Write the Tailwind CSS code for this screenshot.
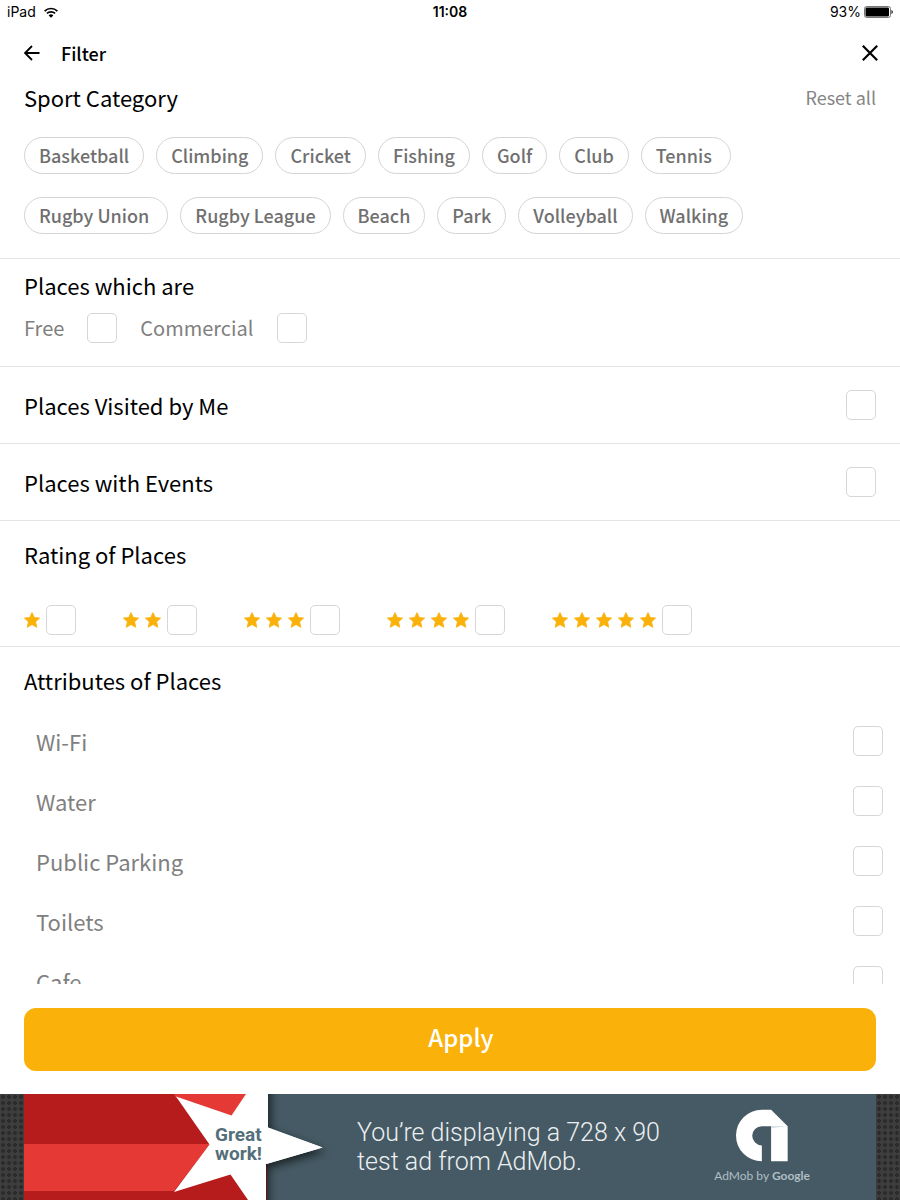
<!DOCTYPE html>
<html lang="en">
<head>
    <meta charset="UTF-8">
    <meta name="viewport" content="width=device-width, initial-scale=1.0, viewport-fit=cover">
    <title>Filter</title>
    <script src="https://cdn.jsdelivr.net/npm/@tailwindcss/browser@4"></script>
</head>
<body class="h-screen flex flex-col overflow-hidden bg-white text-black font-['Noto_Sans_CJK_SC',sans-serif]">
    <!-- Status bar -->
    <div class="h-6 shrink-0 px-[7px] grid grid-cols-3 items-center text-sm leading-5 font-['Inter',sans-serif]">
        <div class="flex items-center gap-2">
            <span>iPad</span>
            <svg class="w-[14px] h-[11px]" viewBox="0 0 14 11" fill="none" stroke="currentColor" stroke-width="1.7">
                <path d="M.6 4.1a9.2 9.2 0 0 1 12.8 0M2.9 6.4a6 6 0 0 1 8.2 0"/>
                <path d="M4.7 8.4a3.4 3.4 0 0 1 4.6 0L7 10.7z" fill="currentColor" stroke="none"/>
            </svg>
        </div>
        <span class="text-center font-semibold">11:08</span>
        <div class="flex items-center justify-end gap-[3px]">
            <span>93%</span>
            <svg class="w-[29px] h-3" viewBox="0 0 29 12">
                <rect x=".5" y=".5" width="26" height="11" rx="2" fill="none" stroke="#777"/>
                <rect x="1.5" y="1.5" width="23.500" height="9" rx="1"/>
                <path d="M27.5 4c1.6.6 1.6 3.4 0 4z"/>
            </svg>
        </div>
    </div>

    <!-- Header -->
    <header class="h-[60px] shrink-0 pl-6 pr-[22px] pb-[2px] flex items-center">
        <button type="button" aria-label="Back">
            <svg class="w-4 h-4" viewBox="0 0 16 16" fill="none" stroke="currentColor" stroke-width="1.8">
                <path d="M15.5 8H1M8 1L1 8l7 7"/>
            </svg>
        </button>
        <h1 class="ml-[21px] text-lg leading-6 font-medium">Filter</h1>
        <button type="button" aria-label="Close" class="ml-auto">
            <svg class="w-4 h-4" viewBox="0 0 16 16" fill="none" stroke="currentColor" stroke-width="2.2">
                <path d="M.8.8l14.4 14.4M15.2.8L.8 15.2"/>
            </svg>
        </button>
    </header>

    <main class="flex-1 min-h-0 overflow-y-auto [scrollbar-width:none]">
        <!-- Sport Category -->
        <section class="px-6 pb-6 border-b border-[#e4e4e4]">
            <div class="flex items-center justify-between">
                <h2 class="text-[22px] leading-[26px]">Sport Category</h2>
                <button type="button" class="text-lg leading-[26px] text-[#858585]">Reset all</button>
            </div>
            <div class="mt-[27px] flex flex-col gap-[23px] text-lg text-[#707070] font-medium">
                <div class="flex flex-wrap gap-3">
                    <button type="button" class="h-[37px] px-[14px] pb-[2px] rounded-full border border-[#d4d4d4]">Basketball</button>
                    <button type="button" class="h-[37px] px-[14px] pb-[2px] rounded-full border border-[#d4d4d4]">Climbing</button>
                    <button type="button" class="h-[37px] px-[14px] pb-[2px] rounded-full border border-[#d4d4d4]">Cricket</button>
                    <button type="button" class="h-[37px] px-[14px] pb-[2px] rounded-full border border-[#d4d4d4]">Fishing</button>
                    <button type="button" class="h-[37px] px-[14px] pb-[2px] rounded-full border border-[#d4d4d4]">Golf</button>
                    <button type="button" class="h-[37px] px-[14px] pb-[2px] rounded-full border border-[#d4d4d4]">Club</button>
                    <button type="button" class="h-[37px] pl-[14px] pr-[18px] pb-[2px] rounded-full border border-[#d4d4d4]">Tennis</button>
                </div>
                <div class="flex flex-wrap gap-3">
                    <button type="button" class="h-[37px] pl-[14px] pr-[18px] pb-[2px] rounded-full border border-[#d4d4d4]">Rugby Union</button>
                    <button type="button" class="h-[37px] px-[14px] pb-[2px] rounded-full border border-[#d4d4d4]">Rugby League</button>
                    <button type="button" class="h-[37px] px-[14px] pb-[2px] rounded-full border border-[#d4d4d4]">Beach</button>
                    <button type="button" class="h-[37px] px-[14px] pb-[2px] rounded-full border border-[#d4d4d4]">Park</button>
                    <button type="button" class="h-[37px] px-[14px] pb-[2px] rounded-full border border-[#d4d4d4]">Volleyball</button>
                    <button type="button" class="h-[37px] px-[14px] pb-[2px] rounded-full border border-[#d4d4d4]">Walking</button>
                </div>
            </div>
        </section>

        <!-- Free / Commercial -->
        <section class="px-6 pt-[11px] pb-[23px] border-b border-[#e4e4e4]">
            <h2 class="text-[22px] leading-[30px]">Places which are</h2>
            <div class="mt-[13px] flex items-center gap-[23px] text-xl leading-[30px] text-[#808080]">
                <label for="free">Free</label>
                <input id="free" type="checkbox" class="appearance-none size-[30px] rounded-[5px] border border-[#d6d6d6] checked:bg-[#fab10a]">
                <label for="commercial">Commercial</label>
                <input id="commercial" type="checkbox" class="appearance-none size-[30px] rounded-[5px] border border-[#d6d6d6] checked:bg-[#fab10a]">
            </div>
        </section>

        <section class="h-[77px] px-6 flex items-center justify-between border-b border-[#e4e4e4]">
            <label for="visited" class="text-[22px] leading-[30px]">Places Visited by Me</label>
            <input id="visited" type="checkbox" class="appearance-none size-[30px] rounded-[5px] border border-[#d6d6d6] checked:bg-[#fab10a]">
        </section>

        <section class="h-[77px] px-6 flex items-center justify-between border-b border-[#e4e4e4]">
            <label for="events" class="text-[22px] leading-[30px]">Places with Events</label>
            <input id="events" type="checkbox" class="appearance-none size-[30px] rounded-[5px] border border-[#d6d6d6] checked:bg-[#fab10a]">
        </section>

        <!-- Rating -->
        <section class="px-6 pt-[18px] pb-[11px] border-b border-[#e4e4e4]">
            <svg class="hidden">
                <symbol id="star" viewBox="0 0 16 16">
                    <path stroke="currentColor" stroke-width=".8" stroke-linejoin="round" d="M8 .6l2.300 4.900 5.300.6-4 3.700 1.200 5.500L8 12.600 3.200 15.300l1.200-5.500L.4 6.100l5.300-.6z"/>
                </symbol>
            </svg>
            <h2 class="text-[22px] leading-[30px]">Rating of Places</h2>
            <div class="mt-[36px] flex flex-wrap gap-[47px] text-[#fab10a]">
                <div class="flex items-center gap-[6px]">
                    <label for="rate1" aria-label="1 star" class="flex gap-[6px]">
                        <svg class="size-4 fill-current"><use href="#star"/></svg>
                    </label>
                    <input id="rate1" type="checkbox" class="appearance-none size-[30px] rounded-[5px] border border-[#d6d6d6] checked:bg-[#fab10a]">
                </div>
                <div class="flex items-center gap-[6px]">
                    <label for="rate2" aria-label="2 stars" class="flex gap-[6px]">
                        <svg class="size-4 fill-current"><use href="#star"/></svg>
                        <svg class="size-4 fill-current"><use href="#star"/></svg>
                    </label>
                    <input id="rate2" type="checkbox" class="appearance-none size-[30px] rounded-[5px] border border-[#d6d6d6] checked:bg-[#fab10a]">
                </div>
                <div class="flex items-center gap-[6px]">
                    <label for="rate3" aria-label="3 stars" class="flex gap-[6px]">
                        <svg class="size-4 fill-current"><use href="#star"/></svg>
                        <svg class="size-4 fill-current"><use href="#star"/></svg>
                        <svg class="size-4 fill-current"><use href="#star"/></svg>
                    </label>
                    <input id="rate3" type="checkbox" class="appearance-none size-[30px] rounded-[5px] border border-[#d6d6d6] checked:bg-[#fab10a]">
                </div>
                <div class="flex items-center gap-[6px]">
                    <label for="rate4" aria-label="4 stars" class="flex gap-[6px]">
                        <svg class="size-4 fill-current"><use href="#star"/></svg>
                        <svg class="size-4 fill-current"><use href="#star"/></svg>
                        <svg class="size-4 fill-current"><use href="#star"/></svg>
                        <svg class="size-4 fill-current"><use href="#star"/></svg>
                    </label>
                    <input id="rate4" type="checkbox" class="appearance-none size-[30px] rounded-[5px] border border-[#d6d6d6] checked:bg-[#fab10a]">
                </div>
                <div class="flex items-center gap-[6px]">
                    <label for="rate5" aria-label="5 stars" class="flex gap-[6px]">
                        <svg class="size-4 fill-current"><use href="#star"/></svg>
                        <svg class="size-4 fill-current"><use href="#star"/></svg>
                        <svg class="size-4 fill-current"><use href="#star"/></svg>
                        <svg class="size-4 fill-current"><use href="#star"/></svg>
                        <svg class="size-4 fill-current"><use href="#star"/></svg>
                    </label>
                    <input id="rate5" type="checkbox" class="appearance-none size-[30px] rounded-[5px] border border-[#d6d6d6] checked:bg-[#fab10a]">
                </div>
            </div>
        </section>

        <!-- Attributes -->
        <section class="pt-[18px]">
            <h2 class="px-6 text-[22px] leading-[30px]">Attributes of Places</h2>
            <div class="mt-4 pl-9 pr-[17px] text-[22px] leading-[30px] text-[#808080]">
                <div class="h-[60px] flex items-center justify-between">
                    <label for="wifi">Wi-Fi</label>
                    <input id="wifi" type="checkbox" class="appearance-none size-[30px] rounded-[5px] border border-[#d6d6d6] checked:bg-[#fab10a]">
                </div>
                <div class="h-[60px] flex items-center justify-between">
                    <label for="water">Water</label>
                    <input id="water" type="checkbox" class="appearance-none size-[30px] rounded-[5px] border border-[#d6d6d6] checked:bg-[#fab10a]">
                </div>
                <div class="h-[60px] flex items-center justify-between">
                    <label for="parking">Public Parking</label>
                    <input id="parking" type="checkbox" class="appearance-none size-[30px] rounded-[5px] border border-[#d6d6d6] checked:bg-[#fab10a]">
                </div>
                <div class="h-[60px] flex items-center justify-between">
                    <label for="toilets">Toilets</label>
                    <input id="toilets" type="checkbox" class="appearance-none size-[30px] rounded-[5px] border border-[#d6d6d6] checked:bg-[#fab10a]">
                </div>
                <div class="h-[60px] flex items-center justify-between">
                    <label for="cafe">Cafe</label>
                    <input id="cafe" type="checkbox" class="appearance-none size-[30px] rounded-[5px] border border-[#d6d6d6] checked:bg-[#fab10a]">
                </div>
            </div>
        </section>
    </main>

    <!-- Apply -->
    <div class="shrink-0 px-6 pt-6 pb-[23px]">
        <button type="button" class="w-full h-[63px] pl-[22px] pb-[6px] rounded-xl bg-[#fab10a] text-white text-2xl font-medium">Apply</button>
    </div>

    <!-- Ad banner -->
    <footer class="h-[106px] shrink-0 px-6 bg-[#3d3d3d] bg-[radial-gradient(circle,#2b2b2b_2px,transparent_2px)] bg-[size:6px_6px] font-['Roboto',sans-serif]">
        <div class="h-full flex items-center bg-[#455a64]">
            <div class="relative w-[300px] h-full shrink-0">
                <svg class="w-[320px] h-[106px]" viewBox="0 0 320 106">
                    <defs>
                        <filter id="shade" x="-10%" y="-10%" width="130%" height="130%">
                            <feDropShadow dx="3" dy="4" stdDeviation="4" flood-color="#000" flood-opacity=".6"/>
                        </filter>
                    </defs>
                    <path fill="#b71c1c" d="M0 0h243v106H0z"/>
                    <path fill="#e53935" d="M0 50h186l-36 47H0zM150 0h75l-14 24-59-20z"/>
                    <path fill="#fff" filter="url(#shade)" d="M244-20V33.500L298.500 53.500 242 70v56h-16V0z"/>
                    <path fill="#fff" d="M152 2.500L185.500 50.500 150 98l56.500-17.500L224 106h18V70l56.500-16.500L243 33.500 244 0h-22l-14.500 21.500z"/>
                </svg>
                <p class="absolute left-[191px] top-[31px] text-[19px] leading-[19px] font-bold text-[#546e7a]">Great<br>work!</p>
            </div>
            <p class="ml-[33px] text-[25px] leading-[29px] font-light text-[#eceff1]">You’re displaying a 728 x 90<br>test ad from AdMob.</p>
            <div class="ml-auto mr-[66px] flex flex-col items-center text-[#b0bec5]">
                <svg class="w-[52px] h-[53px]" viewBox="164 72 157 158">
                    <path fill="#fff" d="M242 229A78 78 0 0 1 242 73H270L320 123V229H270V123H242A28 28 0 0 0 242 181Z"/>
                    <path fill="#cfd8dc" d="M270 123h50l-50 5z"/>
                </svg>
                <p class="mt-1 text-xs leading-5 font-['Lato',sans-serif]">AdMob by <span class="font-bold">Google</span></p>
            </div>
        </div>
    </footer>
</body>
</html>
